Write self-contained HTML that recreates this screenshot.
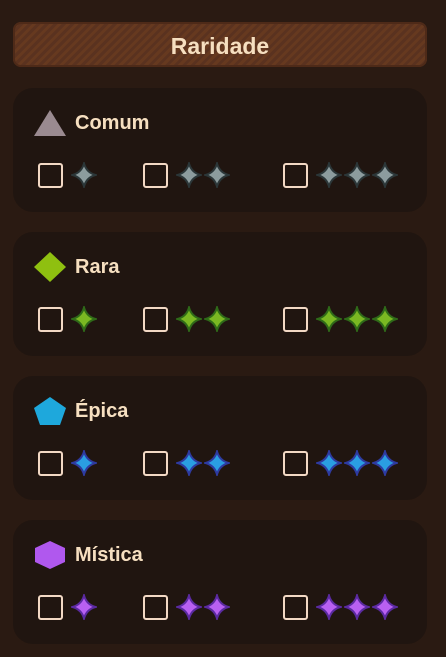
<!DOCTYPE html>
<html><head><meta charset="utf-8"><style>
body{margin:0;width:446px;height:657px;background:#2a1a12;font-family:"Liberation Sans","DejaVu Sans",sans-serif;position:relative;overflow:hidden}
.hdr{position:absolute;left:13px;top:22px;width:414px;height:45px;border-radius:8px;background:repeating-linear-gradient(135deg,#5a321f 0 3px,#66391f 3px 6px);box-shadow:inset 0 0 0 2px #4e2a18;color:#f6dfc0;font-weight:bold;font-size:23px;text-align:center;line-height:49px}
.card{position:absolute;left:13px;width:414px;height:124px;border-radius:20px;background:#201510}
.t{position:absolute;left:62px;top:24px;color:#f6dfc0;font-weight:bold;font-size:20px}
.ic{position:absolute;left:20px;top:20px}
.row{position:absolute;top:74px;left:0}
.g{position:absolute;top:0;display:flex;align-items:center}
.cb{width:21px;height:21px;border:2px solid #f2d8c4;border-radius:3px;margin-right:8px}
svg.s{width:26px;height:26px;margin-right:2px}
</style></head><body>
<div class="hdr">Raridade</div>
<svg width="0" height="0" style="position:absolute"><defs><path id="st" d="M13 1.5 Q15.5 10.5 24.5 13 Q15.5 15.5 13 24.5 Q10.5 15.5 1.5 13 Q10.5 10.5 13 1.5Z"/></defs></svg>

<div class="card" style="top:88px">
<svg class="ic" width="34" height="30" viewBox="0 0 34 30"><polygon points="17,2 33,28 1,28" fill="#9a8a90"/></svg>
<div class="t">Comum</div>
<div class="row">
<div class="g" style="left:25px"><div class="cb"></div><svg class="s" viewBox="0 0 26 26"><use href="#st" fill="#8c9c9e" stroke="#2b3638" stroke-width="2"/></svg></div>
<div class="g" style="left:130px"><div class="cb"></div><svg class="s" viewBox="0 0 26 26"><use href="#st" fill="#8c9c9e" stroke="#2b3638" stroke-width="2"/></svg><svg class="s" viewBox="0 0 26 26"><use href="#st" fill="#8c9c9e" stroke="#2b3638" stroke-width="2"/></svg></div>
<div class="g" style="left:270px"><div class="cb"></div><svg class="s" viewBox="0 0 26 26"><use href="#st" fill="#8c9c9e" stroke="#2b3638" stroke-width="2"/></svg><svg class="s" viewBox="0 0 26 26"><use href="#st" fill="#8c9c9e" stroke="#2b3638" stroke-width="2"/></svg><svg class="s" viewBox="0 0 26 26"><use href="#st" fill="#8c9c9e" stroke="#2b3638" stroke-width="2"/></svg></div>
</div></div>

<div class="card" style="top:232px">
<svg class="ic" width="34" height="30" viewBox="0 0 34 30"><polygon points="17,0 33,15 17,30 1,15" fill="#8fc010"/></svg>
<div class="t">Rara</div>
<div class="row">
<div class="g" style="left:25px"><div class="cb"></div><svg class="s" viewBox="0 0 26 26"><use href="#st" fill="#7ab822" stroke="#2f6a18" stroke-width="2"/></svg></div>
<div class="g" style="left:130px"><div class="cb"></div><svg class="s" viewBox="0 0 26 26"><use href="#st" fill="#7ab822" stroke="#2f6a18" stroke-width="2"/></svg><svg class="s" viewBox="0 0 26 26"><use href="#st" fill="#7ab822" stroke="#2f6a18" stroke-width="2"/></svg></div>
<div class="g" style="left:270px"><div class="cb"></div><svg class="s" viewBox="0 0 26 26"><use href="#st" fill="#7ab822" stroke="#2f6a18" stroke-width="2"/></svg><svg class="s" viewBox="0 0 26 26"><use href="#st" fill="#7ab822" stroke="#2f6a18" stroke-width="2"/></svg><svg class="s" viewBox="0 0 26 26"><use href="#st" fill="#7ab822" stroke="#2f6a18" stroke-width="2"/></svg></div>
</div></div>

<div class="card" style="top:376px">
<svg class="ic" width="34" height="30" viewBox="0 0 34 30"><polygon points="17,1 33,12 27,29 7,29 1,12" fill="#1ea8dc"/></svg>
<div class="t">Épica</div>
<div class="row">
<div class="g" style="left:25px"><div class="cb"></div><svg class="s" viewBox="0 0 26 26"><use href="#st" fill="#2a9ee2" stroke="#2e3aa0" stroke-width="2"/></svg></div>
<div class="g" style="left:130px"><div class="cb"></div><svg class="s" viewBox="0 0 26 26"><use href="#st" fill="#2a9ee2" stroke="#2e3aa0" stroke-width="2"/></svg><svg class="s" viewBox="0 0 26 26"><use href="#st" fill="#2a9ee2" stroke="#2e3aa0" stroke-width="2"/></svg></div>
<div class="g" style="left:270px"><div class="cb"></div><svg class="s" viewBox="0 0 26 26"><use href="#st" fill="#2a9ee2" stroke="#2e3aa0" stroke-width="2"/></svg><svg class="s" viewBox="0 0 26 26"><use href="#st" fill="#2a9ee2" stroke="#2e3aa0" stroke-width="2"/></svg><svg class="s" viewBox="0 0 26 26"><use href="#st" fill="#2a9ee2" stroke="#2e3aa0" stroke-width="2"/></svg></div>
</div></div>

<div class="card" style="top:520px">
<svg class="ic" width="34" height="30" viewBox="0 0 34 30"><polygon points="17,1 32,8 32,22 17,29 2,22 2,8" fill="#b058ee"/></svg>
<div class="t">Mística</div>
<div class="row">
<div class="g" style="left:25px"><div class="cb"></div><svg class="s" viewBox="0 0 26 26"><use href="#st" fill="#b860f2" stroke="#5a2aa0" stroke-width="2"/></svg></div>
<div class="g" style="left:130px"><div class="cb"></div><svg class="s" viewBox="0 0 26 26"><use href="#st" fill="#b860f2" stroke="#5a2aa0" stroke-width="2"/></svg><svg class="s" viewBox="0 0 26 26"><use href="#st" fill="#b860f2" stroke="#5a2aa0" stroke-width="2"/></svg></div>
<div class="g" style="left:270px"><div class="cb"></div><svg class="s" viewBox="0 0 26 26"><use href="#st" fill="#b860f2" stroke="#5a2aa0" stroke-width="2"/></svg><svg class="s" viewBox="0 0 26 26"><use href="#st" fill="#b860f2" stroke="#5a2aa0" stroke-width="2"/></svg><svg class="s" viewBox="0 0 26 26"><use href="#st" fill="#b860f2" stroke="#5a2aa0" stroke-width="2"/></svg></div>
</div></div>
</body></html>
